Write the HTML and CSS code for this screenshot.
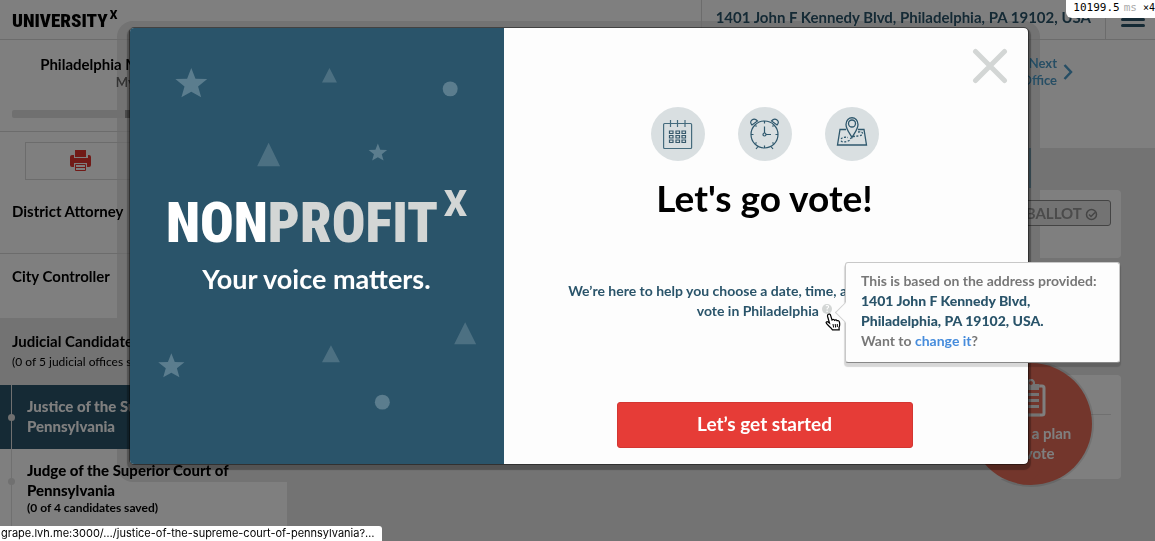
FILE: index.html
```html
<!DOCTYPE html>
<html lang="en">
<head>
<meta charset="utf-8">
<title>Let's go vote!</title>
<link rel="stylesheet" href="styles.css">
</head>
<body>
<div class="page">
  <header class="topbar">
    <a class="site-logo" href="#">UNIVERSITY<sup>X</sup></a>
    <a class="topbar-address" href="#">1401 John F Kennedy Blvd, Philadelphia, PA 19102, USA</a>
    <button class="menu-button" type="button" aria-label="Menu"><span></span><span></span><span></span></button>
  </header>
  <div class="columns">
    <aside class="sidebar">
      <section class="election">
        <h2>Philadelphia Municipal Primary</h2>
        <p>My Ballot</p>
        <div class="progress"><span></span><span class="mark"></span></div>
      </section>
      <div class="tools">
        <button class="print-button" type="button" aria-label="Print">
          <svg width="24" height="22" viewBox="0 0 24 22"><path fill="#e3342f" d="M6 0h11v7H6zM1 7q0-2 2-2h2v3h14V5h1q2 0 2 2v8q0 2-2 2h-2v-4H5v4H3q-2 0-2-2z"/><path fill="none" stroke="#e3342f" d="M6.500 14.500h10v6h-10zM7 17.500h9"/></svg>
        </button>
      </div>
      <nav class="offices">
        <a class="office" href="#">District Attorney</a>
        <a class="office" href="#">City Controller</a>
        <div class="group"><h3>Judicial Candidates</h3><p>(0 of 5 judicial offices selected)</p></div>
        <a class="race current" href="#"><i class="dot"></i><strong>Justice of the Supreme Court of Pennsylvania</strong></a>
        <a class="race" href="#"><i class="dot"></i><strong>Judge of the Superior Court of Pennsylvania</strong><small>(0 of 4 candidates saved)</small></a>
      </nav>
    </aside>
    <main class="content">
      <div class="office-head">
        <a class="next" href="#"><span>Next<br>Office</span><svg width="10" height="18" viewBox="0 0 10 18"><path d="M1.500 2l6.500 7-6.500 7" fill="none" stroke="#4f9cc9" stroke-width="2.500"/></svg></a>
      </div>
      <div class="tabs"><span></span></div>
      <section class="card card-save">
        <button class="ballot-button" type="button">SAVE TO BALLOT <svg width="13" height="13" viewBox="0 0 13 13"><circle cx="6.500" cy="6.500" r="5" fill="none" stroke="#8a8a8a" stroke-width="1.500"/><path d="M4 6.500l2 2 4-4" fill="none" stroke="#8a8a8a" stroke-width="1.500"/></svg></button>
      </section>
      <section class="card card-info"><hr></section>
    </main>
  </div>
  <a class="plan" href="#">
    <svg width="30" height="38" viewBox="0 0 30 38"><rect x="2" y="7" width="26" height="29" rx="2" fill="none" stroke="#fff" stroke-width="3"/><path fill="#fff" d="M7 5h4q0-5 4-5t4 5h4v6H7z"/><circle cx="15" cy="4" r="2" fill="#e66c58"/><path d="M7 15.500h16M7 21.500h16M7 27.500h16" stroke="#fff" stroke-width="3"/></svg>
    <span>Make a plan<br>to vote</span>
  </a>
</div>

<div class="modal-layer">
  <div class="halo">
    <div class="modal" role="dialog" aria-labelledby="modal-title">
      <section class="brand">
        <svg class="confetti" viewBox="0 0 374 437">
          <defs><path id="star" d="M0-16l4.200 10.800L16-4.800 6.800 2.600 9.900 13.500 0 8-9.900 13.500-6.800 2.600-16-4.800l11.800-.4z"/></defs>
          <g fill="#5b7d8e"><use href="#star" x="61" y="56"/><use href="#star" transform="translate(248 125) scale(.58)"/><use href="#star" transform="translate(41 339) scale(.82)"/><circle cx="320.500" cy="61" r="7.500"/><circle cx="252.500" cy="375" r="7.500"/></g>
          <g fill="#4c7082"><path d="M199.500 40l7.500 14.500h-15zM138.500 115l11.500 23.500h-23zM335.500 295l11 22h-22zM201 318l9 17h-18z"/></g>
        </svg>
        <h1 class="brand-name">NON<span>PROFIT</span><sup>X</sup></h1>
        <p class="tagline">Your voice matters.</p>
      </section>
      <section class="vote">
        <button class="close" type="button" aria-label="Close"><svg width="36" height="36" viewBox="0 0 36 36"><path d="M3.500 3.500l29 29m0-29l-29 29" stroke="#d3d6d5" stroke-width="5" stroke-linecap="round"/></svg></button>
        <div class="steps">
          <svg viewBox="0 0 54 54"><circle cx="27" cy="27" r="27" fill="#d9dfe1"/><g fill="none" stroke="#456b7d" stroke-width="1.200"><rect x="12.600" y="16.500" width="28" height="25" rx="1"/><path d="M19.500 13v7M26.500 13v7M34 13v7"/><path stroke="#37596c" d="M18.500 24h3.500v2.500h-3.500zM25 24h3.500v2.500H25zM31 24h3.500v2.500H31zM18.500 28.500h3.500V31h-3.500zM25 28.500h3.500V31H25zM31 28.500h3.500V31H31zM18.500 33h3.500v2.500h-3.500zM25 33h3.500v2.500H25zM31 33h3.500v2.500H31z"/></g></svg>
          <svg viewBox="0 0 54 54"><circle cx="27" cy="27" r="27" fill="#d9dfe1"/><g fill="none" stroke="#2f586d" stroke-width="1.200"><circle cx="26.500" cy="27.500" r="13.500"/><circle cx="26.500" cy="27.500" r="1.500"/><path d="M26.500 26v-6.500M28 27.500h5M26.500 14v2.500M26.500 38.500V41M13 27.500h2.500M37.500 27.500H40M17.500 18.500l1 1M35.500 18.500l-1 1M17.500 36.500l1-1M35.500 36.500l-1-1M20 39.500l-2 2.500M33 39.500l2 2.500M14 18c-4-4 2-8 5.500-4zM39 18c4-4-2-8-5.500-4z"/></g></svg>
          <svg viewBox="0 0 54 54"><circle cx="27" cy="27" r="27" fill="#d9dfe1"/><g fill="none" stroke="#2f586d" stroke-width="1.300"><path d="M21 22.500h-6l-2.500 15.500h29l-2.500-15.500h-6"/><path d="M27 30.500c-2-4-6-8-6-13 0-9 12-9 12 0 0 5-4 9-6 13z"/><circle cx="27" cy="16.500" r="3.500"/><path stroke-dasharray="2 1.500" d="M33 25c6-1 6 3 1 4-6 0-8 1-9 4-3 2-9 3-9 0s4-3 7-2.500"/></g></svg>
        </div>
        <h2 class="vote-title" id="modal-title">Let's go vote!</h2>
        <p class="vote-text">We’re here to help you choose a date, time, and polling place to<br>vote in Philadelphia <span class="help">?</span></p>
        <button class="start" type="button">Let’s get started</button>
      </section>
    </div>
  </div>
</div>

<div class="tooltip" role="tooltip">This is based on the address provided:<br><b>1401 John F Kennedy Blvd,<br>Philadelphia, PA 19102, USA.</b><br>Want to <a href="#">change it</a>?</div>
<svg class="pointer" width="16" height="18" viewBox="0 0 16 18"><path d="M3 1.500c1-1 2.300-.3 2.600.8L7 7c1-.9 2-.6 2.600.3 1-.8 2-.5 2.500.5 1-.5 2 0 2.300 1.200.8 3 .3 4-.4 5.500l.2 2.300H7.500L6 15c-1.500-1-2.500-2.500-4.500-4.500-1-1.300.4-2.200 1.500-1.500l1.500 1L2.600 3.500q-.3-1.400.4-2z" fill="#fff" stroke="#000" stroke-width="1.200"/><path d="M8 11l.6 3.500M10.200 11l.4 3.500M12.300 11v3" stroke="#000"/></svg>
<div class="timing">10199.5 <span>ms</span> <small>×4</small></div>
<div class="link-status">grape.lvh.me:3000/…/justice-of-the-supreme-court-of-pennsylvania?…</div>
</body>
</html>
```
FILE: styles.css
```css
* { box-sizing: border-box; }
body {
  margin: 0;
  min-height: 100vh;
  position: relative;
  overflow: hidden;
  background: #fff;
  color: #000;
  font: bold 15px/20px Lato, sans-serif;
}
h1, h2, h3, p { margin: 0; }
a { color: inherit; text-decoration: none; }
button { font: inherit; cursor: pointer; padding: 0; }

.page { position: relative; min-height: 100vh; display: flex; flex-direction: column; }
.topbar { display: flex; height: 40px; border-bottom: 1px solid #d8d8d8; }
.site-logo { flex: 1; padding: 11px 12px 0; font: 900 19px/20px "Roboto Condensed", Roboto, sans-serif; white-space: nowrap; }
.site-logo sup { font-family: Roboto, sans-serif; font-size: 12px; line-height: 0; vertical-align: 8px; margin-left: 2px; }
.topbar-address { padding: 7px 14px; border: solid #d8d8d8; border-width: 0 1px; color: #2a546a; }
.menu-button { width: 49px; padding: 12px 9px 0 15px; border: 0; background: none; display: flex; flex-direction: column; gap: 3px; }
.menu-button span { width: 24px; height: 3px; background: #2a546a; border-radius: 2px; }

.columns { flex: 1; display: grid; grid-template-columns: 287px 1fr; }
.sidebar { background: #fff; }
.election { height: 92px; padding: 14px 12px 0; text-align: center; border-bottom: 1px solid #d8d8d8; }
.election h2 { font-size: 15px; line-height: 20px; }
.election p { font-size: 13px; line-height: 16px; color: #666; }
.progress { display: flex; margin-top: 20px; height: 8px; border-radius: 2px; background: #e0e0e0; }
.progress span { width: 113px; }
.progress .mark { width: 8px; background: #999; }
.tools { padding: 10px 25px 9px; }
.print-button { display: block; width: 111px; height: 38px; background: #fff; border: 1px solid #d8d8d8; }
.print-button svg { display: block; margin: auto; }
.office { display: block; height: 65px; padding: 12px; border-bottom: 1px solid #d8d8d8; }
.office + .office { height: 64px; border: 0; }
.group { background: #e6e6e6; height: 67px; padding: 13px 12px; }
.group h3 { font-size: 15px; line-height: 20px; }
.group p { font-size: 12px; line-height: 22px; font-weight: normal; }
.race { position: relative; display: block; padding: 11px 27px 13px; }
.race::before { content: ""; position: absolute; left: 11px; top: 0; bottom: 0; width: 1px; background: #e0e0e0; }
.race strong { display: block; }
.race small { display: block; font-size: 12px; line-height: 16px; }
.race.current { background: #2a546a; color: #fff; }
.dot { position: absolute; left: 8px; top: 29px; width: 7px; height: 7px; border-radius: 50%; background: #e0e0e0; }

.content { background: #e6e6e6; }
.office-head { height: 108px; padding: 13px 82px; background: #fff; display: flex; justify-content: flex-end; }
.next { display: flex; align-items: center; gap: 6px; height: 38px; font-size: 13px; line-height: 17px; text-align: right; color: #4f9cc9; }
.tabs { height: 42px; padding-right: 124px; }
.tabs span { display: block; height: 40px; border-right: 2px solid #8ab9cf; }
.card { margin: 0 34px; background: #fff; border-radius: 4px; }
.card-save { height: 68px; padding: 10px; display: flex; justify-content: flex-end; }
.ballot-button { height: 26px; padding: 0 12px; background: #e6e6e6; border: 1px solid #888; border-radius: 3px; color: #969696; }
.ballot-button svg { vertical-align: -2px; }
.card-info { height: 104px; margin-top: 117px; padding-top: 39px; }
.card-info hr { margin: 0 10px; border: 0; height: 1px; background: #e0e0e0; }
.plan {
  position: absolute; right: 63px; top: 363px;
  width: 122px; height: 122px; padding-top: 16px; border-radius: 50%;
  background: #e66c58; color: #fff; text-align: center;
  box-shadow: 0 0 0 2px rgba(0, 0, 0, .1);
}
.plan svg { display: block; margin: 0 auto 6px; }

.modal-layer { position: absolute; inset: 0; display: flex; justify-content: center; align-items: flex-start; padding: 28px 16px 0 18px; }
.modal-layer::before { content: ""; position: absolute; inset: 0; background: rgba(0, 0, 0, .5); }
.halo { position: relative; width: 898px; max-width: 100%; }
.halo::before { content: ""; position: absolute; inset: -7px -12px -18px -13px; border-radius: 16px; background: #737373; mix-blend-mode: darken; }
.modal {
  position: relative; display: grid; grid-template-columns: 374fr 524fr; min-height: 436px;
  border-radius: 4px; overflow: hidden; background: #fdfdfd;
  outline: 1px solid rgba(0, 0, 0, .4); box-shadow: 0 3px 1px 3px rgba(0, 0, 0, .28);
}
.brand { position: relative; background: #2a546a; color: #fff; text-align: center; padding-top: 163px; }
.confetti { position: absolute; inset: 0; width: 100%; height: 100%; }
.brand-name { position: relative; font: 900 56px/64px "Roboto Condensed", Roboto, sans-serif; white-space: nowrap; }
.brand-name span, .brand-name sup { color: #d3d6d5; }
.brand-name sup { font-family: Roboto, sans-serif; font-size: 36px; line-height: 0; vertical-align: 26px; margin-left: 6px; }
.tagline { position: relative; font-size: 27px; line-height: 32px; margin-top: 8px; }
.vote { position: relative; display: flex; flex-direction: column; align-items: center; padding: 79px 51px 16px 49px; color: #2a546a; }
.close { position: absolute; right: 20px; top: 20px; border: 0; background: none; line-height: 0; }
.steps { display: flex; gap: 33px; }
.steps svg { width: 54px; height: 54px; }
.vote-title { margin-top: 15px; color: #000; font-size: 37px; line-height: 44px; }
.vote-text { margin-top: 61px; text-align: center; font-size: 14px; }
.help { display: inline-block; width: 10px; height: 10px; border-radius: 50%; background: #d3d6d5; color: #fff; font-size: 9px; line-height: 10px; vertical-align: 4px; }
.start { margin-top: auto; width: 296px; height: 46px; padding-bottom: 2px; border: 1px solid #d33632; border-radius: 3px; background: #e63c37; color: #fff; font-size: 19px; }

.tooltip {
  position: absolute; right: 35px; top: 262px; width: 275px; padding: 8px 14px 11px 15px;
  border: 1px solid #c8c8c8; border-bottom-color: #888; border-radius: 3px; background: #fdfdfd;
  color: #777; font-size: 14px; white-space: nowrap; box-shadow: 0 3px 1px 1px rgba(0, 0, 0, .15);
}
.tooltip::before {
  content: ""; position: absolute; left: -8px; top: 42px; width: 14px; height: 14px;
  background: #fdfdfd; border: solid #d0d0d0; border-width: 0 0 1px 1px; transform: rotate(45deg);
}
.tooltip b { color: #2a546a; }
.tooltip a { color: #468cdc; }
.pointer { position: absolute; left: 825px; top: 313px; }
.timing {
  position: absolute; right: 0; top: 0; height: 18px; padding: 0 0 0 7px; border-radius: 0 0 0 6px;
  background: #fff; display: flex; gap: 4px; font: 11px/15px "DejaVu Sans Mono", monospace; white-space: nowrap;
}
.timing span { color: #aaa; }
.timing small { font-size: 10px; margin-left: 2px; }
.link-status {
  position: absolute; left: 0; bottom: 0; padding: 0 7px 0 1px; border-radius: 0 3px 0 0;
  background: #fff; font: 11px/15px Inter, sans-serif;
}
```
